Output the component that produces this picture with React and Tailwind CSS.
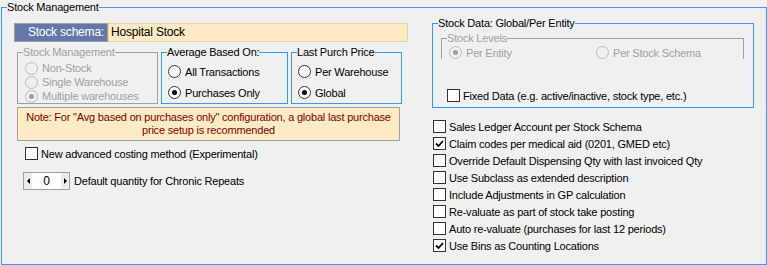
import React from 'react';

const BLUE = 'border-[#3399ff]';

function Radio({ checked, disabled, children, className = '' }) {
  return (
    <div className={`flex items-center gap-[4px] ${className}`}>
      <span
        className={`flex h-[13px] w-[13px] shrink-0 items-center justify-center rounded-full border ${
          disabled ? 'border-[#bcbcbc] bg-[#f0f0f0]' : 'border-[#333333] bg-white'
        }`}
      >
        {checked && (
          <span className={`h-[5px] w-[5px] rounded-full ${disabled ? 'bg-[#a0a0a0]' : 'bg-black'}`} />
        )}
      </span>
      <span className={disabled ? 'text-[#a0a0a0]' : 'text-black'}>{children}</span>
    </div>
  );
}

function Check({ checked, children, className = '' }) {
  return (
    <div className={`flex items-center gap-[3px] ${className}`}>
      <span className="flex h-[13px] w-[13px] shrink-0 items-center justify-center border border-[#333333] bg-white">
        {checked && (
          <svg width="9" height="9" viewBox="0 0 9 9">
            <path d="M1 4.5 L3.5 7 L8 2" fill="none" stroke="#000" strokeWidth="1.8" />
          </svg>
        )}
      </span>
      <span>{children}</span>
    </div>
  );
}

export default function App() {
  const options = [
    ['Sales Ledger Account per Stock Schema', false],
    ['Claim codes per medical aid (0201, GMED etc)', true],
    ['Override Default Dispensing Qty with last invoiced Qty', false],
    ['Use Subclass as extended description', false],
    ['Include Adjustments in GP calculation', false],
    ['Re-valuate as part of stock take posting', false],
    ['Auto re-valuate (purchases for last 12 periods)', false],
    ['Use Bins as Counting Locations', true],
  ];

  return (
    <div className="h-[265px] w-[767px] overflow-hidden bg-[#f0f0f0] font-['Liberation_Sans',Arial,sans-serif] text-[11px] leading-[14px] tracking-[-0.2px] text-black">
      <fieldset className={`ml-[1px] h-[265px] w-[766px] border ${BLUE}`}>
        <legend className="ml-[5px] leading-[14px]">Stock Management</legend>
        <div className="flex gap-[24px] pl-[12px]">
          {/* left column */}
          <div className="w-[394px] pt-[9px]">
            <div className="flex h-[19px]">
              <div className="w-[94px] border border-[#a0a0a0] bg-[#6478a8] pr-[3px] text-right text-[12px] leading-[17px] text-white">
                Stock schema:
              </div>
              <div className="flex-1 border border-[#e2d3a8] bg-[#feebc4] pl-[2px] text-[12px] leading-[17px]">
                Hospital Stock
              </div>
            </div>

            <div className="ml-[3px] mt-[3px] flex gap-[3px]">
              <fieldset className="h-[59px] w-[141px] border border-[#a0a0a0]">
                <legend className="ml-[5px] leading-[14px] text-[#a0a0a0]">Stock Management</legend>
                <div className="pl-[7px] pt-[2px]">
                  <Radio disabled className="h-[14px]">Non-Stock</Radio>
                  <Radio disabled className="h-[14px]">Single Warehouse</Radio>
                  <Radio disabled checked className="h-[14px]">Multiple warehouses</Radio>
                </div>
              </fieldset>
              <fieldset className={`h-[59px] w-[127px] border ${BLUE}`}>
                <legend className="ml-[5px] leading-[14px]">Average Based On:</legend>
                <div className="pl-[6px] pt-[2px]">
                  <Radio className="h-[21px]">All Transactions</Radio>
                  <Radio checked className="h-[21px]">Purchases Only</Radio>
                </div>
              </fieldset>
              <fieldset className={`h-[59px] w-[111px] border ${BLUE}`}>
                <legend className="ml-[5px] leading-[14px]">Last Purch Price</legend>
                <div className="pl-[6px] pt-[2px]">
                  <Radio className="h-[21px]">Per Warehouse</Radio>
                  <Radio checked className="h-[21px]">Global</Radio>
                </div>
              </fieldset>
            </div>

            <div className="ml-[3px] mt-[3px] h-[34px] w-[383px] border border-[#a0a0a0] bg-[#feebc4] pt-[3px] text-center leading-[13px] text-[#800000]">
              Note: For "Avg based on purchases only" configuration, a global last purchase
              <br />
              price setup is recommended
            </div>

            <Check className="ml-[11px] mt-[6px] h-[13px]">New advanced costing method (Experimental)</Check>

            <div className="ml-[9px] mt-[12px] flex items-center gap-[4px]">
              <div className="flex h-[18px] w-[47px] items-center border border-[#a0a0a0] bg-white">
                <span className="flex h-[16px] w-[8px] items-center justify-center bg-[#ececec]">
                  <span className="h-0 w-0 border-y-[3px] border-r-[3px] border-y-transparent border-r-black" />
                </span>
                <span className="flex-1 text-center text-[12px]">0</span>
                <span className="flex h-[16px] w-[8px] items-center justify-center bg-[#ececec]">
                  <span className="h-0 w-0 border-y-[3px] border-l-[3px] border-y-transparent border-l-black" />
                </span>
              </div>
              <span>Default quantity for Chronic Repeats</span>
            </div>
          </div>

          {/* right column */}
          <div className="w-[322px] pt-[2px]">
            <fieldset className={`h-[92px] w-[322px] border ${BLUE}`}>
              <legend className="ml-[5px] leading-[14px]">Stock Data: Global/Per Entity</legend>
              <div className="pl-[8px] pt-[1px]">
                <fieldset className="h-[28px] w-[303px] border border-b-0 border-[#a0a0a0]">
                  <legend className="ml-[5px] leading-[14px] text-[#a0a0a0]">Stock Levels</legend>
                  <div className="flex pl-[7px] pt-[1px]">
                    <Radio disabled checked className="h-[13px] w-[147px]">Per Entity</Radio>
                    <Radio disabled className="h-[13px]">Per Stock Schema</Radio>
                  </div>
                </fieldset>
                <Check className="ml-[6px] mt-[30px] h-[13px]">Fixed Data (e.g. active/inactive, stock type, etc.)</Check>
              </div>
            </fieldset>

            <div className="mt-[10px] pl-[1px]">
              {options.map(([label, checked]) => (
                <Check key={label} checked={checked} className="h-[17px]">
                  {label}
                </Check>
              ))}
            </div>
          </div>
        </div>
      </fieldset>
    </div>
  );
}
